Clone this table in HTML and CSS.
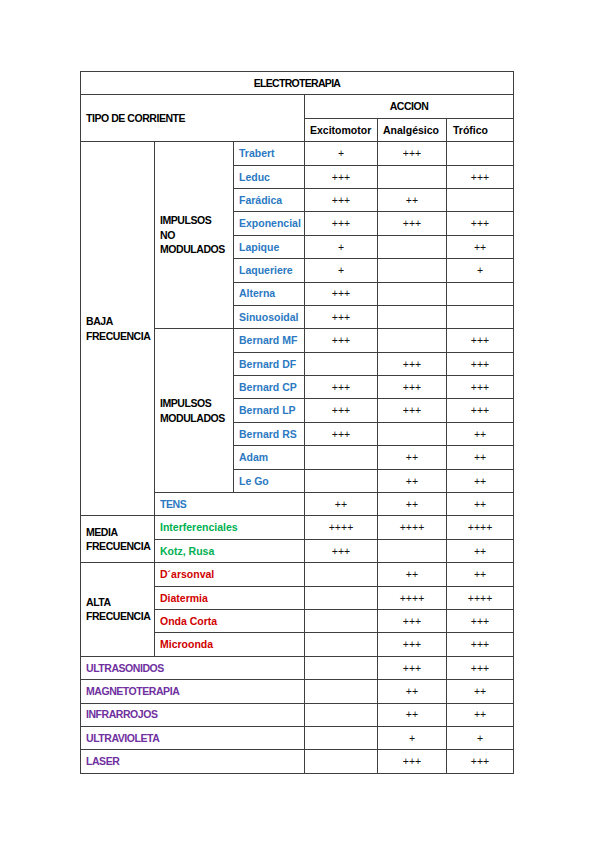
FILE: index.html
```html
<!DOCTYPE html>
<html lang="es">
<head>
<meta charset="utf-8">
<title>Electroterapia</title>
<link rel="stylesheet" href="styles.css">
</head>
<body>
<table class="tabla">
  <colgroup>
    <col class="c1"><col class="c2"><col class="c3"><col class="c4"><col class="c5"><col class="c6">
  </colgroup>
  <tr><td colspan="6" class="center caps title">ELECTROTERAPIA</td></tr>
  <tr><td colspan="3" rowspan="2" class="caps">TIPO DE CORRIENTE</td><td colspan="3" class="center caps">ACCION</td></tr>
  <tr><td>Excitomotor</td><td>Analgésico</td><td class="pad">Trófico</td></tr>

  <tr><td rowspan="16" class="caps">BAJA<br>FRECUENCIA</td><td rowspan="8" class="caps">IMPULSOS<br>NO<br>MODULADOS</td><td class="blue">Trabert</td><td class="v">+</td><td class="v">+++</td><td class="v"></td></tr>
  <tr><td class="blue">Leduc</td><td class="v">+++</td><td class="v"></td><td class="v">+++</td></tr>
  <tr><td class="blue">Farádica</td><td class="v">+++</td><td class="v">++</td><td class="v"></td></tr>
  <tr><td class="blue">Exponencial</td><td class="v">+++</td><td class="v">+++</td><td class="v">+++</td></tr>
  <tr><td class="blue">Lapique</td><td class="v">+</td><td class="v"></td><td class="v">++</td></tr>
  <tr><td class="blue">Laqueriere</td><td class="v">+</td><td class="v"></td><td class="v">+</td></tr>
  <tr><td class="blue">Alterna</td><td class="v">+++</td><td class="v"></td><td class="v"></td></tr>
  <tr><td class="blue">Sinuosoidal</td><td class="v">+++</td><td class="v"></td><td class="v"></td></tr>

  <tr><td rowspan="7" class="caps">IMPULSOS<br>MODULADOS</td><td class="blue">Bernard MF</td><td class="v">+++</td><td class="v"></td><td class="v">+++</td></tr>
  <tr><td class="blue">Bernard DF</td><td class="v"></td><td class="v">+++</td><td class="v">+++</td></tr>
  <tr><td class="blue">Bernard CP</td><td class="v">+++</td><td class="v">+++</td><td class="v">+++</td></tr>
  <tr><td class="blue">Bernard LP</td><td class="v">+++</td><td class="v">+++</td><td class="v">+++</td></tr>
  <tr><td class="blue">Bernard RS</td><td class="v">+++</td><td class="v"></td><td class="v">++</td></tr>
  <tr><td class="blue">Adam</td><td class="v"></td><td class="v">++</td><td class="v">++</td></tr>
  <tr><td class="blue">Le Go</td><td class="v"></td><td class="v">++</td><td class="v">++</td></tr>
  <tr><td colspan="2" class="blue caps">TENS</td><td class="v">++</td><td class="v">++</td><td class="v">++</td></tr>

  <tr><td rowspan="2" class="caps">MEDIA<br>FRECUENCIA</td><td colspan="2" class="green">Interferenciales</td><td class="v">++++</td><td class="v">++++</td><td class="v">++++</td></tr>
  <tr><td colspan="2" class="green">Kotz, Rusa</td><td class="v">+++</td><td class="v"></td><td class="v">++</td></tr>

  <tr><td rowspan="4" class="caps">ALTA<br>FRECUENCIA</td><td colspan="2" class="red">D´arsonval</td><td class="v"></td><td class="v">++</td><td class="v">++</td></tr>
  <tr><td colspan="2" class="red">Diatermia</td><td class="v"></td><td class="v">++++</td><td class="v">++++</td></tr>
  <tr><td colspan="2" class="red">Onda Corta</td><td class="v"></td><td class="v">+++</td><td class="v">+++</td></tr>
  <tr><td colspan="2" class="red">Microonda</td><td class="v"></td><td class="v">+++</td><td class="v">+++</td></tr>

  <tr><td colspan="3" class="purple caps">ULTRASONIDOS</td><td class="v"></td><td class="v">+++</td><td class="v">+++</td></tr>
  <tr><td colspan="3" class="purple caps">MAGNETOTERAPIA</td><td class="v"></td><td class="v">++</td><td class="v">++</td></tr>
  <tr><td colspan="3" class="purple caps">INFRARROJOS</td><td class="v"></td><td class="v">++</td><td class="v">++</td></tr>
  <tr><td colspan="3" class="purple caps">ULTRAVIOLETA</td><td class="v"></td><td class="v">+</td><td class="v">+</td></tr>
  <tr><td colspan="3" class="purple caps">LASER</td><td class="v"></td><td class="v">+++</td><td class="v">+++</td></tr>
</table>
</body>
</html>
```
FILE: styles.css
```css
html, body {
  margin: 0;
  padding: 0;
  background: #ffffff;
}
body {
  padding: 71px 0 0 80px;
  font-family: "Liberation Sans", Arial, sans-serif;
  font-size: 10.5px;
  font-weight: bold;
  color: #000000;
}
.tabla {
  border-collapse: collapse;
  table-layout: fixed;
  width: 433px;
}
.c1 { width: 74px; }
.c2 { width: 79px; }
.c3 { width: 71px; }
.c4 { width: 73px; }
.c5 { width: 69px; }
.c6 { width: 67px; }
.tabla tr { height: 23.4px; }
.tabla td {
  border: 1px solid #3f3f3f;
  padding: 0 5px;
  line-height: 14.5px;
  vertical-align: middle;
  text-align: left;
  white-space: nowrap;
  overflow: hidden;
}
.tabla td.caps { letter-spacing: -0.45px; }
.tabla td.title { letter-spacing: -0.7px; }
.tabla td.center { text-align: center; }
.tabla td.pad { padding-left: 6px; }
.tabla td.v {
  text-align: center;
  font-weight: normal;
  padding: 0;
  color: #111111;
}
.blue { color: #2b79c2; }
.green { color: #00b050; }
.red { color: #d00000; }
.purple { color: #7030a0; }
```
